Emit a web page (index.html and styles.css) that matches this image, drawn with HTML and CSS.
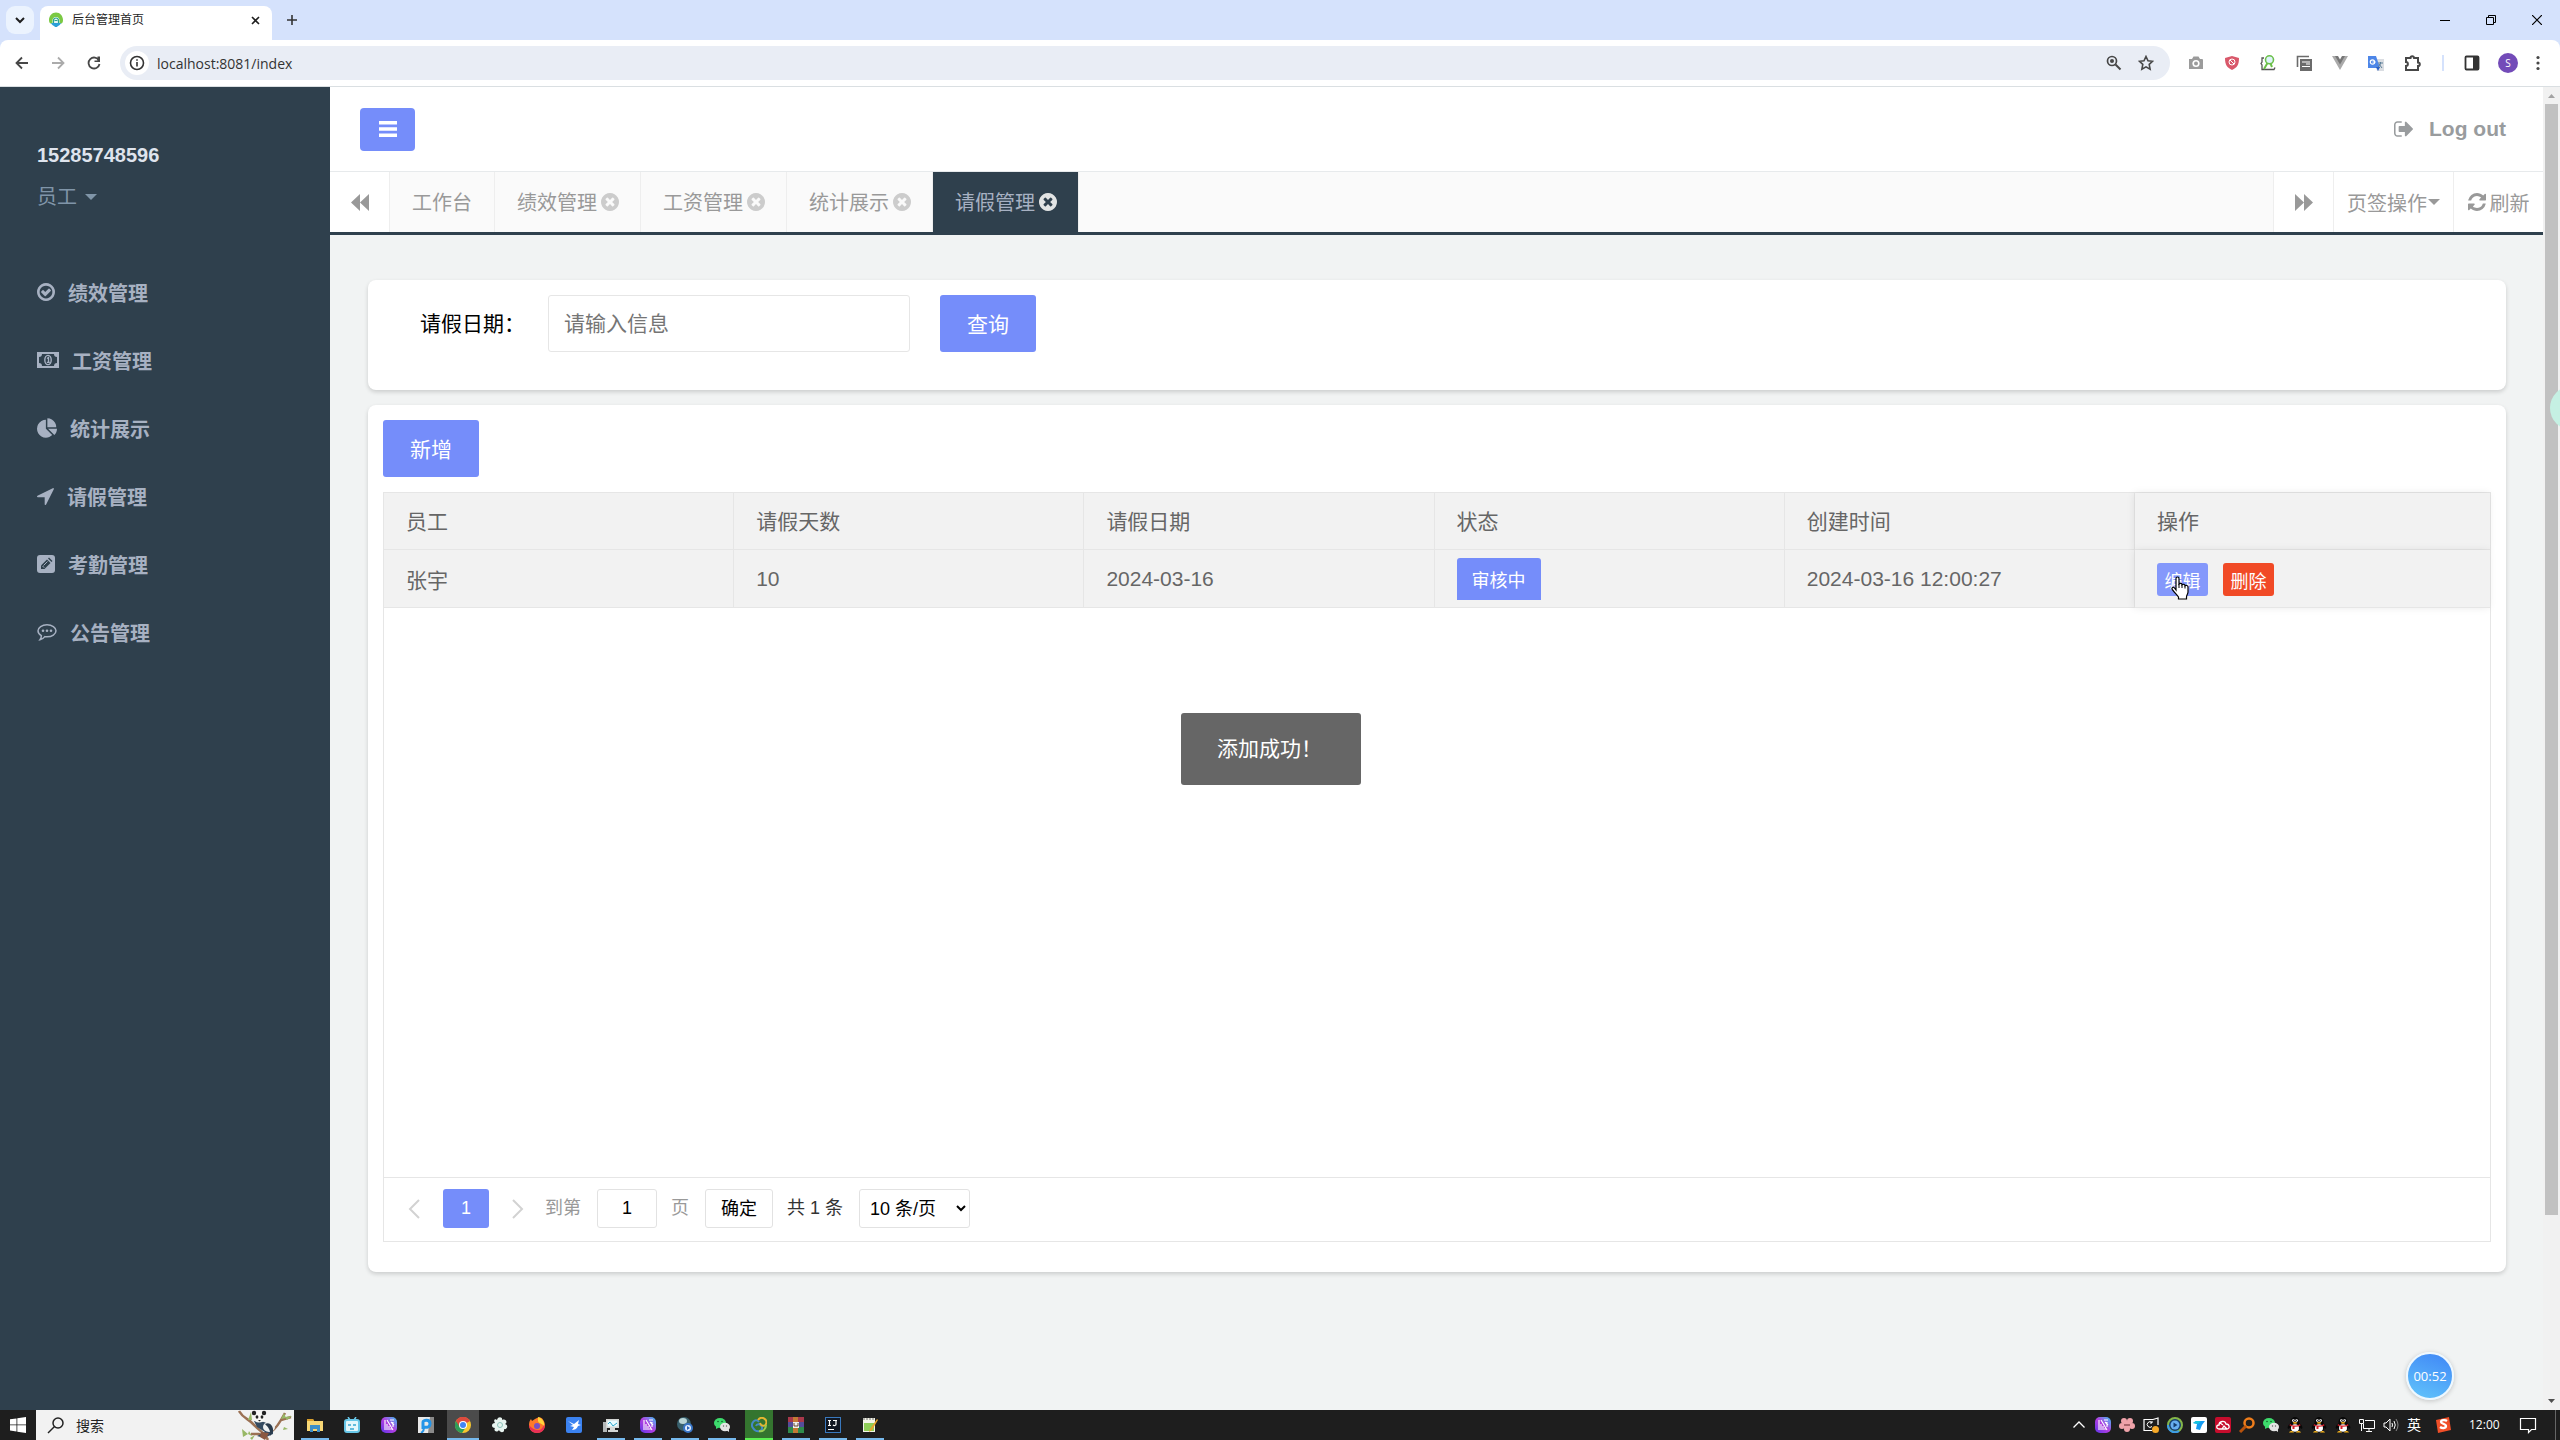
FILE: index.html
```html
<!DOCTYPE html>
<html lang="zh-CN">
<head>
<meta charset="utf-8">
<title>后台管理首页</title>
<link rel="stylesheet" href="styles.css">
</head>
<body>
<svg class="defs" width="0" height="0" aria-hidden="true">
  <symbol id="times" viewBox="128 128 1536 1536"><path d="M1277 1122q0-26-19-45l-181-181 181-181q19-19 19-45 0-27-19-46l-90-90q-19-19-46-19-26 0-45 19l-181 181-181-181q-19-19-45-19-27 0-46 19l-90 90q-19 19-19 46 0 26 19 45l181 181-181 181q-19 19-19 45 0 27 19 46l90 90q19 19 46 19 26 0 45-19l181-181 181 181q19 19 45 19 27 0 46-19l90-90q19-19 19-46zm387-226q0 209-103 385.5t-279.5 279.5-385.5 103-385.5-103-279.5-279.5-103-385.5 103-385.5 279.5-279.5 385.5-103 385.5 103 279.5 279.5 103 385.5z"/></symbol>
  <symbol id="wechat" viewBox="0 0 16 16"><ellipse cx="6" cy="6" rx="6" ry="5" fill="#3ddb6c"/><path d="M2 9v3l3-1.500z" fill="#3ddb6c"/><circle cx="4" cy="4.500" r=".8" fill="#145c2b"/><circle cx="8" cy="4.500" r=".8" fill="#145c2b"/><ellipse cx="11" cy="10" rx="5" ry="4.200" fill="#e4e4e4"/><path d="M12 13l3 2v-3z" fill="#e4e4e4"/><circle cx="9.500" cy="9" r=".7" fill="#666"/><circle cx="12.500" cy="9" r=".7" fill="#666"/></symbol>
  <symbol id="maze" viewBox="0 0 16 16"><defs><linearGradient id="mz" x1="0" y1="1" x2="1" y2="0"><stop offset="0" stop-color="#5a35e8"/><stop offset=".5" stop-color="#b43ee0"/><stop offset="1" stop-color="#3fc3f5"/></linearGradient></defs><rect width="16" height="16" rx="5" fill="url(#mz)"/><path d="M4 3v10M6 3l6 10M6 7v6M9 3l4 0M8 13V9M10 5l3 3M12 10V5M9 12l2 0" stroke="#fff" stroke-width="1.100" fill="none"/></symbol>
  <symbol id="penguin" viewBox="0 0 16 16"><ellipse cx="8" cy="5" rx="4.500" ry="5" fill="#080808"/><path d="M4 6c-3 2-4 4-3 6l2-1c0 3 2 4 5 4s5-1 5-4l2 1c1-2 0-4-3-6z" fill="#080808"/><ellipse cx="8" cy="11" rx="4" ry="3.800" fill="#fff"/><circle cx="6.400" cy="3.600" r="1.400" fill="#fff"/><circle cx="9.600" cy="3.600" r="1.400" fill="#fff"/><circle cx="6.700" cy="3.700" r=".6"/><circle cx="9.300" cy="3.700" r=".6"/><ellipse cx="8" cy="5.800" rx="2.200" ry=".9" fill="#f6b21b"/><path d="M3 7c3 2 7 2 10 0l.5 1.500c-2 1-4 1.300-6 1.200V12h-2V9.300L2.500 8.500z" fill="#d8202c"/><path d="M2 15.500c1-2 4-2 5 0zM9 15.500c1-2 4-2 5 0z" fill="#f6b21b"/></symbol>
</svg>

<header class="browser">
  <div class="tabstrip">
    <button class="tab-search" aria-label="搜索标签页"><svg width="10" height="7" viewBox="0 0 10 7"><path d="M1 1l4 4 4-4" fill="none" stroke="#1f1f1f" stroke-width="2"/></svg></button>
    <div class="browser-tab">
      <svg width="16" height="16" viewBox="0 0 16 16"><path d="M8 .5C4 .5 1 4 1 8c0 2 .5 3 1.500 3.500h2V8.500a3.500 3.500 0 0 1 7 0v3h2C14.500 11 15 10 15 8c0-4-3-7.500-7-7.500z" fill="#7ac943"/><path d="M5.500 11V8.500a2.500 2.500 0 0 1 5 0V11" fill="#e8f6f4" stroke="#2aa48e" stroke-width="1.200"/><path d="M3 11h10c-1 2.500-3 2.500-4 4H7c-1-1.500-3-1.500-4-4z" fill="#2b9fd8"/><path d="M6.500 8.500h3" stroke="#2aa48e"/></svg>
      <span class="browser-title">后台管理首页</span>
      <button class="plain" aria-label="关闭标签页"><svg width="9" height="9" viewBox="0 0 9 9"><path d="M1 1l7 7M8 1L1 8" stroke="#1f1f1f" stroke-width="1.600"/></svg></button>
    </div>
    <button class="plain new-tab" aria-label="新标签页"><svg width="12" height="12" viewBox="0 0 12 12"><path d="M6 1v10M1 6h10" stroke="#333" stroke-width="1.600"/></svg></button>
    <div class="window-buttons">
      <button class="plain" aria-label="最小化"><svg width="10" height="10" viewBox="0 0 10 10"><path d="M0 5.500h10" stroke="#000"/></svg></button>
      <button class="plain" aria-label="还原"><svg width="10" height="10" viewBox="0 0 10 10"><path d="M.5 2.500h7v7h-7zM2.500 2V.500h7v7H8" fill="none" stroke="#000"/></svg></button>
      <button class="plain" aria-label="关闭"><svg width="10" height="10" viewBox="0 0 10 10"><path d="M0 0l10 10M10 0L0 10" stroke="#000" stroke-width="1.200"/></svg></button>
    </div>
  </div>
  <div class="toolbar">
    <div class="nav-buttons">
      <button class="plain" aria-label="后退"><svg width="14" height="14" viewBox="0 0 14 14"><path d="M13 7H2M7 1.500L1.500 7 7 12.500" fill="none" stroke="#474747" stroke-width="1.800"/></svg></button>
      <button class="plain" aria-label="前进"><svg width="14" height="14" viewBox="0 0 14 14"><path d="M1 7h11M7 1.500L12.500 7 7 12.500" fill="none" stroke="#ababab" stroke-width="1.800"/></svg></button>
      <button class="plain" aria-label="重新加载"><svg width="14" height="14" viewBox="0 0 14 14"><path d="M12 4.500A5.500 5.500 0 1 0 12.500 8" fill="none" stroke="#474747" stroke-width="1.800"/><path d="M13 .5V6H7.500V4.500h3V.500z" fill="#474747"/></svg></button>
    </div>
    <div class="omnibox">
      <span class="site-info"><svg width="16" height="16" viewBox="0 0 16 16"><circle cx="8" cy="8" r="6.500" fill="none" stroke="#333" stroke-width="1.600"/><path d="M8 7v4.500M8 4.200v1.600" stroke="#333" stroke-width="1.600"/></svg></span>
      <input class="url" aria-label="地址" value="localhost:8081/index">
      <svg width="16" height="16" viewBox="0 0 16 16"><circle cx="6" cy="6" r="4.500" fill="none" stroke="#474747" stroke-width="1.700"/><circle cx="6" cy="6" r="2" fill="#474747"/><path d="M9.500 9.500l5 5" stroke="#474747" stroke-width="2"/></svg>
      <svg width="16" height="16" viewBox="0 0 16 16"><path d="M8 1.500l2 4.300 4.600.5-3.400 3.100.9 4.700L8 11.800l-4.100 2.300.9-4.700L1.400 6.300l4.600-.5z" fill="none" stroke="#474747" stroke-width="1.600"/></svg>
    </div>
    <div class="extensions">
      <svg width="16" height="16" viewBox="0 0 16 16"><path d="M1 4h3l1.500-2.500h5L12 4h2a1 1 0 0 1 1 1v9H1z" fill="#9b9b9b"/><circle cx="8" cy="8.500" r="3.600" fill="#fff"/><circle cx="8" cy="8.500" r="2" fill="#9b9b9b"/></svg>
      <svg width="16" height="16" viewBox="0 0 16 16"><path d="M8 1l7 2c0 7-2 9.500-7 12C3 12.500 1 10 1 3z" fill="#d9586a"/><circle cx="8" cy="7" r="3" fill="none" stroke="#fff"/><path d="M6 5l4 4" stroke="#fff"/></svg>
      <svg width="16" height="16" viewBox="0 0 16 16"><path d="M4 3H2v4L1 8.500 2 10v4.500h12l1-2" fill="none" stroke="#555" stroke-width="1.300"/><path d="M7.500 8L4 14M10.500 8.500L12 12" stroke="#6cc04a" stroke-width="2"/><circle cx="9.500" cy="4.800" r="4" fill="#dff3fb" stroke="#6cc04a" stroke-width="1.600"/></svg>
      <svg width="16" height="16" viewBox="0 0 16 16"><path d="M1.500 12V1.500H13" fill="none" stroke="#6b6b6b" stroke-width="1.600"/><rect x="4" y="4" width="12" height="12" fill="#6b6b6b"/><path d="M6 7h8M10 9h4M6 11.500h8" stroke="#fff" stroke-width="1.200"/></svg>
      <svg width="16" height="16" viewBox="0 0 16 16"><path d="M0 1h4l4 7 4-7h4L8 15z" fill="#aaa"/><path d="M3 1h3l2 3.500L10 1h3L8 9.500z" fill="#777"/></svg>
      <svg width="16" height="16" viewBox="0 0 16 16"><path d="M6 4h10v12H9z" fill="#dadde2"/><path d="M0 1h8l4 12H0z" fill="#4d86e8"/><path d="M8 12h4l-2 4z" fill="#2b5fc4"/><circle cx="4.500" cy="7" r="2.200" fill="none" stroke="#fff" stroke-width="1.200"/><path d="M4.500 7h3" stroke="#fff"/><path d="M10 8h5M12.500 7v1c0 2-1 3-2.500 4M11 9l3 4" stroke="#5c7f99" fill="none"/></svg>
      <svg width="18" height="18" viewBox="0 0 18 18"><path d="M2 4h4.500a1.800 1.800 0 0 1 3.600 0H14v4.500a1.800 1.800 0 0 1 0 3.600V16H2v-4c2.500 0 2.500-4 0-4z" fill="none" stroke="#474747" stroke-width="2"/></svg>
      <span class="divider"></span>
      <svg width="16" height="16" viewBox="0 0 16 16"><rect x="1.500" y="1.500" width="13" height="13" rx="1" fill="none" stroke="#333" stroke-width="1.800"/><path d="M9 2h6v12H9z" fill="#333"/></svg>
      <span class="avatar">S</span>
      <svg width="4" height="16" viewBox="0 0 4 16"><g fill="#474747"><circle cx="2" cy="2.500" r="1.600"/><circle cx="2" cy="8" r="1.600"/><circle cx="2" cy="13.500" r="1.600"/></g></svg>
    </div>
  </div>
</header>

<div class="viewport">
  <aside class="sidebar">
    <div class="profile">
      <strong class="profile-name">15285748596</strong>
      <button class="plain role">员工 <span class="caret"></span></button>
    </div>
    <nav class="menu">
      <a href="#"><svg width="18" height="18" viewBox="128 128 1536 1536"><path d="M1299 813l-422 422q-19 19-45 19t-45-19l-294-294q-19-19-19-45t19-45l102-102q19-19 45-19t45 19l147 147 275-275q19-19 45-19t45 19l102 102q19 19 19 45t-19 45zm141 83q0-148-73-273t-198-198-273-73-273 73-198 198-73 273 73 273 198 198 273 73 273-73 198-198 73-273zm224 0q0 209-103 385.5t-279.500 279.500-385.500 103-385.500-103-279.500-279.500-103-385.500 103-385.500 279.500-279.500 385.500-103 385.500 103 279.500 279.500 103 385.500z"/></svg>绩效管理</a>
      <a href="#"><svg width="22" height="16" viewBox="0 0 22 16"><path fill-rule="evenodd" d="M0 0h22v16H0zM5 2a3 3 0 0 1-3 3v6a3 3 0 0 1 3 3h12a3 3 0 0 1 3-3V5a3 3 0 0 1-3-3z"/><ellipse cx="11" cy="8" rx="3.200" ry="4.600" fill="none" stroke="#a7b1c2" stroke-width="1.400"/><path d="M10 6.500l1.500-1V10M9.800 10.300h3" fill="none" stroke="#a7b1c2" stroke-width="1.300"/></svg>工资管理</a>
      <a href="#"><svg width="20" height="20" viewBox="0 0 1728 1664"><path d="M768 890l546 546q-106 108-247.500 168t-298.500 60q-209 0-385.500-103t-279.500-279.500-103-385.500 103-385.500 279.500-279.500 385.500-103v762zm187 6h773q0 157-60 298.500t-168 247.500zm709-128h-768v-768q209 0 385.500 103t279.500 279.500 103 385.500z"/></svg>统计展示</a>
      <a href="#"><svg width="17" height="17" viewBox="190 250 1420 1420"><path d="M1593 349l-640 1280q-17 35-57 35-5 0-15-2-22-5-35.500-22.500t-13.500-39.500v-576h-576q-22 0-39.500-13.500t-22.500-35.500 4-42 29-30l1280-640q13-7 29-7 27 0 45 19 15 14 18.500 34.500t-6.500 39.500z"/></svg>请假管理</a>
      <a href="#"><svg width="18" height="18" viewBox="0 0 18 18"><rect width="18" height="18" rx="3"/><path d="M4 14v-3.500l6-6L13.500 8l-6 6z" fill="#2f404d"/><path d="M11 3.600l1-1 3.500 3.500-1 1z" fill="#2f404d"/><path d="M5.500 11l1.700 1.700M10.500 6.500l-4 4" stroke="#a7b1c2"/></svg>考勤管理</a>
      <a href="#"><svg width="20" height="18" viewBox="0 0 20 18"><path d="M10 1.800c5 0 9 2.600 9 6s-4 6-9 6c-.8 0-1.500 0-2.200-.2C6.500 15.300 5 16.500 3 16.800c.9-1.200 1.400-2.600 1.400-4.200C2.300 11.500 1 9.800 1 7.800c0-3.400 4-6 9-6z" fill="none" stroke="#a7b1c2" stroke-width="1.500"/><circle cx="6" cy="7.800" r="1.300"/><circle cx="10" cy="7.800" r="1.300"/><circle cx="14" cy="7.800" r="1.300"/></svg>公告管理</a>
    </nav>
  </aside>

  <main class="page">
    <div class="topbar">
      <button class="menu-toggle" aria-label="切换菜单"><svg width="18" height="16" viewBox="0 0 18 16"><path d="M0 0h18v3.500H0zM0 6.200h18v3.500H0zM0 12.400h18v3.500H0z" fill="#fff"/></svg></button>
      <a class="logout" href="#"><svg width="19" height="16" viewBox="64 256 1568 1280"><path d="M704 1440q0 4 1 20t.5 26.500-3 23.500-10 19.500-20.500 6.500h-320q-119 0-203.500-84.500t-84.500-203.500v-704q0-119 84.500-203.500t203.500-84.500h320q13 0 22.500 9.500t9.500 22.500q0 4 1 20t.5 26.500-3 23.500-10 19.500-20.500 6.500h-320q-66 0-113 47t-47 113v704q0 66 47 113t113 47h312l11.500 1 11.500 3 8 5.500 7 9 2 13.500zm928-544q0 26-19 45l-544 544q-19 19-45 19t-45-19-19-45v-288h-448q-26 0-45-19t-19-45v-384q0-26 19-45t45-19h448v-288q0-26 19-45t45-19 45 19l544 544q19 19 19 45z"/></svg>Log out</a>
    </div>
    <div class="page-tabs">
      <button class="tab-tool scroll-left" aria-label="向左"><svg width="18" height="17" viewBox="0 0 18 17"><path d="M9 0v17L0 8.500zM18 0v17L9 8.500z"/></svg></button>
      <div class="page-tab home"><a href="#">工作台</a></div>
      <div class="page-tab"><a href="#">绩效管理</a><button class="plain" aria-label="关闭"><svg width="18" height="18"><use href="#times"/></svg></button></div>
      <div class="page-tab"><a href="#">工资管理</a><button class="plain" aria-label="关闭"><svg width="18" height="18"><use href="#times"/></svg></button></div>
      <div class="page-tab"><a href="#">统计展示</a><button class="plain" aria-label="关闭"><svg width="18" height="18"><use href="#times"/></svg></button></div>
      <div class="page-tab active"><a href="#">请假管理</a><button class="plain" aria-label="关闭"><svg width="18" height="18"><use href="#times"/></svg></button></div>
      <div class="tab-tools">
        <button class="tab-tool scroll-right" aria-label="向右"><svg width="18" height="17" viewBox="0 0 18 17"><path d="M0 0v17l9-8.500zM9 0v17l9-8.500z"/></svg></button>
        <button class="tab-tool tab-actions">页签操作<span class="caret"></span></button>
        <button class="tab-tool tab-refresh"><svg width="18" height="18" viewBox="128 128 1536 1536"><path d="M1639 1056q0 5-1 7-64 268-268 434.500t-478 166.500q-146 0-282.500-55t-243.500-157l-129 129q-19 19-45 19t-45-19-19-45v-448q0-26 19-45t45-19h448q26 0 45 19t19 45-19 45l-137 137q71 66 161 102t187 36q134 0 250-65t186-179q11-17 53-117 8-23 30-23h192q13 0 22.500 9.500t9.500 22.500zm25-800v448q0 26-19 45t-45 19h-448q-26 0-45-19t-19-45 19-45l138-138q-148-137-349-137-134 0-250 65t-186 179q-11 17-53 117-8 23-30 23h-199q-13 0-22.500-9.500t-9.500-22.500v-7q65-268 270-434.500t480-166.500q146 0 284 55.500t245 156.500l130-129q19-19 45-19t45 19 19 45z"/></svg>刷新</button>
      </div>
    </div>

    <div class="content">
      <form class="card search-form">
        <label for="leave-date">请假日期：</label>
        <input id="leave-date" class="field" type="text" placeholder="请输入信息">
        <button class="btn" type="button">查询</button>
      </form>

      <section class="card list">
        <button class="btn" type="button">新增</button>
        <div class="grid">
          <table>
            <thead><tr><th>员工</th><th>请假天数</th><th>请假日期</th><th>状态</th><th>创建时间</th><th class="pinned">操作</th></tr></thead>
            <tbody><tr><td>张宇</td><td>10</td><td>2024-03-16</td><td><div class="cell"><button class="status">审核中</button></div></td><td>2024-03-16 12:00:27</td>
              <td class="pinned"><div class="cell actions"><button class="btn-xs edit">编辑
                <svg class="cursor" width="18" height="24" viewBox="0 0 18 24"><path d="M5 14V2.500C5 .5 8 .5 8 2.500V8c1-1 3-.7 3 .7 1-.9 3-.4 3 1 1-.7 3-.2 3 1.300v5c0 2-1.500 3-1.500 5v2h-8v-2C6 19 3 16 1.200 13.300.300 11.500 2.500 10.500 3.500 12z" fill="#fff" stroke="#000" stroke-width="1.200"/><path d="M8 8v4M11 9v3M14 10v2.500" stroke="#000"/></svg></button><button class="btn-xs delete">删除</button></div></td></tr></tbody>
          </table>
          <div class="pager">
            <button class="plain arrow" aria-label="上一页"><svg width="12" height="20" viewBox="0 0 12 20"><path d="M11 1l-9 9 9 9" fill="none" stroke="#d2d2d2" stroke-width="2"/></svg></button>
            <button class="current">1</button>
            <button class="plain arrow" aria-label="下一页"><svg width="12" height="20" viewBox="0 0 12 20"><path d="M1 1l9 9-9 9" fill="none" stroke="#d2d2d2" stroke-width="2"/></svg></button>
            <label class="skip" for="page-no">到第</label>
            <input id="page-no" class="page-no" type="text" value="1">
            <span class="skip unit">页</span>
            <button class="confirm">确定</button>
            <span class="total">共 1 条</span>
            <select class="limit" aria-label="每页条数"><option>10 条/页</option></select>
          </div>
        </div>
      </section>
    </div>
  </main>

  <div class="scrollbar" aria-hidden="true">
    <svg width="17" height="17" viewBox="0 0 17 17"><path d="M5 11l3.500-4 3.500 4z" fill="#a3a3a3"/></svg>
    <div class="thumb"></div>
    <svg width="17" height="17" viewBox="0 0 17 17"><path d="M5 6l3.500 4L12 6z" fill="#505050"/></svg>
  </div>

  <div class="toast" role="status">添加成功！</div>
  <div class="edge-bubble"></div>
  <div class="timer">00:52</div>
</div>

<footer class="taskbar">
  <button class="plain start" aria-label="开始"><svg width="16" height="16" viewBox="0 0 16 16"><path d="M0 2.300l6.500-.9v6.100H0zM7.300 1.300L16 0v7.500H7.300zM0 8.300h6.500v6.200L0 13.600zM7.300 8.300H16V16l-8.700-1.300z" fill="#fff"/></svg></button>
  <div class="search">
    <svg width="18" height="18" viewBox="0 0 18 18"><circle cx="11" cy="7" r="5" fill="none" stroke="#222" stroke-width="1.500"/><path d="M7.500 10.500L1 17" stroke="#222" stroke-width="1.500"/></svg>
    <input aria-label="搜索" placeholder="搜索">
    <svg width="56" height="30" viewBox="0 0 56 30"><path d="M1 1c4 7 9 8 12 11 8 8 10 9 14 13l3 5M27 26c8-4 12-9 16-16l4-7M43 10l10-3M13 24l8 0 7 3" fill="none" stroke="#9b7154" stroke-width="2.500"/><path d="M10 10l3-8 1 8zM43 9l3-6 2 5zM47 7l7-1-5 4zM46 17l4 2-5 1zM4 19l6 5-5 3zM12 28l5-3-3 5zM11 21l3 5-4-2z" fill="#98b866"/><path d="M16 11l10 1 9 4v8l-9 4-7-2 8-4-8-5z" fill="#344a60"/><ellipse cx="31" cy="17" rx="6" ry="5" fill="#eef0f0"/><path d="M27 14c5-3 9 3 8 8l-3 4c1-6-2-9-5-12z" fill="#293a4b"/><ellipse cx="21" cy="7" rx="6" ry="5.500" fill="#f8f8f5"/><circle cx="16" cy="3" r="2.200" fill="#222"/><circle cx="26" cy="3" r="2.200" fill="#222"/><ellipse cx="19" cy="7" rx="1.400" ry="1.800" fill="#222"/><ellipse cx="24" cy="7" rx="1.400" ry="1.800" fill="#222"/><path d="M20 10h3l-1.500 1.500z" fill="#222"/><path d="M23 22l8 1-4 7-5-3z" fill="#8b5942"/></svg>
  </div>
  <div class="apps">
    <span class="app running"><svg width="16" height="16" viewBox="0 0 16 16"><path d="M0 2h6l1 2h9v10H0z" fill="#f8d775"/><path d="M0 2h6l1 2H0z" fill="#d99e2b"/><path d="M3 15V8h10v7h-3v-3H6v3z" fill="#3d8fc9"/></svg></span>
    <span class="app"><svg width="16" height="16" viewBox="0 0 16 16"><path d="M4 0l2 3M12 0l-2 3" stroke="#68c7e8" stroke-width="1.500"/><rect x="1" y="3" width="14" height="12" rx="2" fill="#e4f7fc" stroke="#68c7e8" stroke-width="2"/><path d="M4 8h3M9 8h3M6 12h4" stroke="#37a8d1" stroke-width="1.500"/></svg></span>
    <span class="app"><svg width="16" height="16"><use href="#maze"/></svg></span>
    <span class="app"><svg width="16" height="16" viewBox="0 0 16 16"><path d="M0 0h16v16H0z" fill="#e8e8e8"/><path d="M12 0h4v16h-6z" fill="#8a8a8a"/><path d="M5 12V5c0-2 7-3 7 1.500S8 10.500 6 10" fill="none" stroke="#2495e8" stroke-width="3"/><path d="M3 16c2-1 3-3 3-6" fill="none" stroke="#2495e8" stroke-width="2"/></svg></span>
    <span class="app running focused"><svg width="16" height="16" viewBox="0 0 16 16"><circle cx="8" cy="8" r="8" fill="#f7c62f"/><path d="M8 8L1 4a8 8 0 0 1 14 0z" fill="#dd4b3e"/><path d="M8 8L1 4a8 8 0 0 0 6 12l4-6z" fill="#2e9f58"/><path d="M4 5a8 8 0 0 1 4-1h7A8 8 0 0 0 1 4l3 5z" fill="#dd4b3e"/><circle cx="8" cy="8" r="4" fill="#fff"/><circle cx="8" cy="8" r="3" fill="#4285f4"/></svg></span>
    <span class="app"><svg width="16" height="16" viewBox="0 0 16 16"><path d="M5 3c1-4 6-3 5 0 4-2 6 3 3 4 4 1 2 6-1 5 1 4-4 4-5 1-2 3-6 1-4-2-4 0-4-5 0-5-2-3 0-5 2-3z" fill="#e8f4f0"/><circle cx="8" cy="8" r="2.500" fill="none" stroke="#8cc4bb"/></svg></span>
    <span class="app"><svg width="16" height="16" viewBox="0 0 16 16"><path d="M8 1c4-3 8 3 8 7 0 5-4 8-8 8s-8-3-8-8c0-3 1-5 2-6l1 2 3-2z" fill="#ff7a2a"/><path d="M0 8c0 5 4 8 8 8 6 0 9-5 7-9-1 4-3 6-6 6S2 11 0 8z" fill="#e92f57"/><path d="M9 0c4 1 7 5 6 9-2-3-5-2-6-5z" fill="#ffd63b"/><circle cx="8" cy="9" r="3" fill="#7951c4"/></svg></span>
    <span class="app"><svg width="16" height="16" viewBox="0 0 16 16"><rect width="16" height="16" rx="2" fill="#3b82f0"/><path d="M2 4l6 3 5-4-1 4 3 1-3 1c-1 3-4 4-6 4l2-3-4-1 3-1z" fill="#fff"/></svg></span>
    <span class="app running"><svg width="16" height="16" viewBox="0 0 16 16"><path d="M0 5h4v10H0z" fill="#b4b8b8"/><path d="M3 2h13v9H3zM7 11h5v2h3v2H5v-2h2z" fill="#d4d6d4"/><path d="M4.500 3.500h10v6h-10z" fill="#e9fbff"/><path d="M5 7l2-2 3 4 4-3" fill="none" stroke="#2ba6c9"/></svg></span>
    <span class="app running"><svg width="16" height="16"><use href="#maze"/></svg></span>
    <span class="app running"><svg width="16" height="16" viewBox="0 0 16 16"><circle cx="7" cy="7" r="7" fill="#38606d"/><ellipse cx="6" cy="4" rx="4" ry="3" fill="#b9d4d6"/><circle cx="11" cy="11" r="5" fill="#3975c6"/><circle cx="11" cy="11" r="3" fill="#e2edff"/><path d="M10 9l3 2-3 2z" fill="#2865bc"/></svg></span>
    <span class="app running"><svg width="16" height="16"><use href="#wechat"/></svg></span>
    <span class="app running recording"><svg width="16" height="16" viewBox="0 0 16 16"><g fill="none" stroke-width="2"><path d="M8 5C4 0-1 7 2 11c3 5 10 4 9-1-1-3-5-4-6-1" stroke="#4588c7"/><path d="M7 3c4-5 10 0 8 4-1 3-5 2-6-1" stroke="#e5b532"/><path d="M8 14c4 1 7-2 7-6" stroke="#9acd52"/></g></svg></span>
    <span class="app running"><svg width="16" height="16" viewBox="0 0 16 16"><path d="M0 0h16v5H0z" fill="#a9384b"/><path d="M0 5h16v5H0z" fill="#554d9b"/><path d="M0 10h16v6H0z" fill="#2f8b4c"/><path d="M5 0h5v16H5z" fill="#c47a35"/><path d="M5 5h6v6H5z" fill="#eee"/><path d="M6 6v3h4V6" fill="none" stroke="#6b4a2d"/></svg></span>
    <span class="app running"><svg width="16" height="16" viewBox="0 0 16 16"><rect x=".5" y=".5" width="15" height="15" fill="#111722" stroke="#3978bd"/><path d="M3 3.500h3M4.500 3.500v5M3 8.500h3M8 3.500h4M11 3.500v4c0 1-2 1.500-3 .5M3 12.500h6" fill="none" stroke="#fff" stroke-width="1.200"/></svg></span>
    <span class="app running"><svg width="16" height="16" viewBox="0 0 16 16"><path d="M1 1h12v14H1z" fill="#f4f5e8"/><path d="M2 6h10v8H2z" fill="#8fce57"/><path d="M2 1v2M5 1v2M8 1v2M11 1v2" stroke="#777"/><path d="M15 2L8 12l-1 3 3-2 6-10z" fill="#e6a42d"/></svg></span>
  </div>
  <div class="tray">
    <svg width="16" height="16" viewBox="0 0 16 16"><path d="M2.500 10.500L8 5l5.500 5.500" fill="none" stroke="#fff" stroke-width="1.300"/></svg>
    <svg width="16" height="16"><use href="#maze"/></svg>
    <svg width="16" height="16" viewBox="0 0 16 16"><g fill="#f0a3aa"><circle cx="5" cy="4" r="3"/><circle cx="11" cy="4" r="3"/><circle cx="13" cy="9" r="3"/><circle cx="8" cy="12" r="3"/><circle cx="3" cy="9" r="3"/><circle cx="8" cy="8" r="4"/></g><path d="M5 8h6" stroke="#a9646b" stroke-width="2"/></svg>
    <svg width="16" height="16" viewBox="0 0 16 16"><path d="M10 2.500H1v11h8M10 2.500l5-1.500v7" fill="none" stroke="#fff" stroke-width="1.200"/><path d="M9 5.500a2.800 2.800 0 1 0 0 4M9 4v2H7" fill="none" stroke="#fff"/><circle cx="12.500" cy="12.500" r="3.500" fill="#f7a928"/></svg>
    <svg width="16" height="16" viewBox="0 0 16 16"><circle cx="8" cy="8" r="7" fill="#173d6f" stroke="#85b74a" stroke-width="2"/><path d="M1 8a7 7 0 0 0 11 6" fill="none" stroke="#3b9ce8" stroke-width="2"/><circle cx="8" cy="8" r="4.500" fill="#67aef2"/><path d="M6.500 5.500l4 2.500-4 2.500z" fill="#173d6f"/></svg>
    <svg width="16" height="16" viewBox="0 0 16 16"><rect width="16" height="16" rx="2" fill="#fff"/><path d="M2 6l3-2h9l-3 4-2 5-4-1 1-5z" fill="#149bf2"/><path d="M2 6l3-2h5L7 7z" fill="#16c5dd"/></svg>
    <svg width="16" height="16" viewBox="0 0 16 16"><rect width="16" height="16" rx="2" fill="#c70d2d"/><path d="M4 12c-3 0-3-4 0-4 0-4 6-5 7-1 4 0 4 5 1 5zM7 12l2-3 3 3M5 6l3 2" fill="none" stroke="#fff" stroke-width="1.300"/></svg>
    <svg width="16" height="16" viewBox="0 0 16 16"><circle cx="10" cy="6" r="4.500" fill="none" stroke="#ef7d1b" stroke-width="2.500"/><path d="M7 9l-6 6" stroke="#b7520c" stroke-width="3"/></svg>
    <svg width="16" height="16"><use href="#wechat"/></svg>
    <svg width="16" height="16"><use href="#penguin"/></svg>
    <svg width="16" height="16"><use href="#penguin"/></svg>
    <svg width="16" height="16"><use href="#penguin"/></svg>
    <svg width="16" height="16" viewBox="0 0 16 16"><path d="M6 3.500h9.500v8H4.500V7M10 12v3M7 14.500h6M.5 2.500h4v4h-4zM2.500 6v8" fill="none" stroke="#fff"/></svg>
    <svg width="16" height="16" viewBox="0 0 16 16"><path d="M1 6h2l4-4v12l-4-4H1z" fill="none" stroke="#fff"/><path d="M9 6q1 2 0 4M11 4q2.500 4 0 8" fill="none" stroke="#fff"/><path d="M13 2q4 6 0 12" fill="none" stroke="#888"/></svg>
    <span class="ime">英</span>
    <svg class="sogou" width="16" height="16" viewBox="0 0 16 16"><path d="M1 3l13-3 2 13-13 3z" fill="#f04f28"/><path d="M12 4c-2-1.500-6-1-6 1s5 1.500 5 4-4 2.500-6 1" fill="none" stroke="#fff" stroke-width="2.300"/></svg>
    <time class="clock">12:00</time>
    <svg width="18" height="18" viewBox="0 0 18 18"><path d="M1.500 2.500h15v11h-4l-3 3v-3h-8z" fill="none" stroke="#fff" stroke-width="1.200"/></svg>
    <span class="show-desktop"></span>
  </div>
</footer>
</body>
</html>
```
FILE: styles.css
```css
* { box-sizing: border-box; }

body {
  margin: 0;
  min-height: 100vh;
  display: flex;
  flex-direction: column;
  font-family: "Liberation Sans", "Noto Sans CJK SC", sans-serif;
  font-size: 20px;
  background: #f1f3f3;
}

button, input, select { font: inherit; margin: 0; }
button { cursor: pointer; }
a { text-decoration: none; color: inherit; }
svg { display: block; flex: none; }
.defs { position: absolute; }

.plain {
  display: flex;
  align-items: center;
  justify-content: center;
  padding: 0;
  border: 0;
  background: none;
  color: inherit;
}

/* browser chrome */
.browser {
  flex: none;
  font-family: "Open Sans", "Noto Sans CJK SC", sans-serif;
  border-bottom: 1px solid #dadfe2;
  background: #d5e2fc;
}
.tabstrip {
  display: flex;
  height: 40px;
  padding: 6px 0 0 6px;
}
.tab-search {
  display: flex;
  align-items: center;
  justify-content: center;
  width: 28px;
  height: 28px;
  margin-right: 6px;
  padding: 0;
  border: 0;
  border-radius: 9px;
  background: #ebf3fe;
}
.browser-tab {
  display: flex;
  align-items: center;
  width: 232px;
  height: 34px;
  padding: 0 12px 6px 8px;
  border-radius: 8px 8px 0 0;
  background: #fff;
}
.browser-title {
  flex: 1;
  margin-left: 8px;
  font-size: 12px;
  line-height: 16px;
  color: #1f1f1f;
}
.new-tab { width: 28px; height: 28px; margin-left: 6px; }
.window-buttons { display: flex; margin-left: auto; }
.window-buttons .plain { width: 46px; height: 28px; }
.toolbar {
  display: flex;
  align-items: center;
  height: 46px;
  padding: 0 20px 0 4px;
  border-radius: 8px 8px 0 0;
  background: #fff;
}
.nav-buttons { display: flex; width: 116px; }
.nav-buttons .plain { width: 36px; height: 34px; }
.omnibox {
  flex: 1;
  display: flex;
  align-items: center;
  gap: 16px;
  height: 34px;
  padding: 0 16px 0 5px;
  border-radius: 17px;
  background: #e9edf5;
}
.site-info {
  display: flex;
  align-items: center;
  justify-content: center;
  width: 24px;
  height: 24px;
  border-radius: 50%;
  background: #fff;
}
.url {
  flex: 1;
  min-width: 0;
  margin-left: -8px;
  padding: 0;
  border: 0;
  background: none;
  font-size: 14px;
  color: #333;
}
.extensions {
  display: flex;
  align-items: center;
  gap: 20px;
  padding-left: 18px;
}
.extensions .divider { width: 2px; height: 16px; background: #d5e2fc; }
.avatar {
  width: 20px;
  height: 20px;
  margin: 0 -2px;
  border-radius: 50%;
  background: #734bb8;
  color: #fff;
  font-size: 10px;
  line-height: 20px;
  text-align: center;
}

/* application frame */
.viewport {
  position: relative;
  flex: 1;
  display: flex;
  overflow: hidden;
}
.sidebar {
  flex: none;
  width: 330px;
  background: #2f404d;
  color: #a7b1c2;
}
.profile {
  display: flex;
  flex-direction: column;
  align-items: flex-start;
  gap: 14px;
  padding: 54px 37px 47px;
}
.profile-name {
  line-height: 28px;
  color: #dfe4ed;
}
.role {
  gap: 8px;
  line-height: 28px;
  color: #8095a8;
}
.caret {
  border: 6px solid transparent;
  border-top-color: currentColor;
  border-bottom: 0;
}
.menu a {
  display: flex;
  align-items: center;
  gap: 13px;
  height: 68px;
  padding-left: 37px;
  font-weight: 700;
}
.menu svg { fill: #a7b1c2; }

.page { flex: 1; min-width: 0; }
.topbar {
  display: flex;
  align-items: center;
  justify-content: space-between;
  height: 85px;
  padding: 0 37px 0 30px;
  border-bottom: 1px solid #e7eaec;
  background: #fff;
}
.menu-toggle {
  display: flex;
  align-items: center;
  justify-content: center;
  width: 55px;
  height: 43px;
  padding: 0;
  border: 0;
  border-radius: 4px;
  background: #758dfa;
}
.logout {
  display: flex;
  align-items: center;
  gap: 16px;
  font-size: 21px;
  font-weight: 700;
  color: #999c9e;
}
.logout svg { fill: #999c9e; }

.page-tabs {
  display: flex;
  height: 63px;
  border-bottom: 3px solid #2f404d;
  background: #fafafa;
  color: #999;
}
.page-tab {
  display: flex;
  align-items: center;
  gap: 4px;
  padding: 0 21px 1px 22px;
  border-right: 1px solid #eee;
}
.page-tab.home { padding-right: 22px; }
.page-tab svg { fill: #ccc; }
.page-tab.active { background: #2f404d; color: #a7b1c2; }
.page-tab.active svg { fill: #e2e4e4; }
.tab-tools { display: flex; margin-left: auto; }
.tab-tool {
  display: flex;
  align-items: center;
  justify-content: center;
  padding: 0;
  border: 0;
  border-left: 1px solid #eee;
  background: #fff;
  color: #999;
}
.tab-tool svg { fill: #999; }
.scroll-left { width: 60px; border-left: 0; border-right: 1px solid #eee; }
.scroll-right { width: 60px; }
.tab-actions { width: 120px; gap: 1px; }
.tab-refresh { width: 90px; gap: 4px; }

.content { padding: 45px 37px 138px 38px; }
.card {
  border-radius: 8px;
  background: #fff;
  box-shadow: 0 2px 4px rgba(0, 0, 0, .16);
  font-size: 21px;
}
.search-form {
  display: flex;
  height: 110px;
  margin-bottom: 15px;
  padding: 15px 52px;
}
.search-form label { width: 128px; line-height: 57px; }
.field {
  width: 362px;
  height: 57px;
  margin-right: 30px;
  padding: 0 15px;
  border: 1px solid #e6e6e6;
  border-radius: 3px;
}
.field::placeholder { color: #757575; }
.btn {
  display: block;
  width: 96px;
  height: 57px;
  padding: 0 0 2px;
  border: 0;
  border-radius: 3px;
  background: #758dfa;
  color: #fff;
}
.list { padding: 15px 15px 30px; }
.grid {
  display: flex;
  flex-direction: column;
  min-height: 750px;
  margin-top: 15px;
  border: 1px solid #e6e6e6;
}
table {
  width: 100%;
  table-layout: fixed;
  border-collapse: separate;
  border-spacing: 0;
  color: #666;
}
th, td {
  padding: 0 22px;
  border-right: 1px solid #e6e6e6;
  border-bottom: 1px solid #e6e6e6;
  background: #f2f2f2;
  text-align: left;
  font-weight: 400;
}
th { height: 57px; padding-bottom: 2px; }
td { height: 58px; }
.pinned { width: 355px; border-right: 0; box-shadow: -1px 0 8px rgba(0, 0, 0, .08); }
.cell { display: flex; align-items: center; gap: 15px; height: 57px; }
.status {
  width: 84px;
  height: 42px;
  padding: 0;
  border: 0;
  border-radius: 3px 3px 0 0;
  background: #758dfa;
  color: #fff;
  font-size: 18px;
}
.actions { padding-top: 2px; }
.btn-xs {
  position: relative;
  width: 51px;
  height: 33px;
  padding: 0;
  border: 0;
  border-radius: 3px;
  color: #fff;
  font-size: 18px;
}
.edit { background: #8498fb; }
.delete { background: #f14a26; }
.cursor { position: absolute; left: 14px; top: 13px; }

.pager {
  display: flex;
  height: 64px;
  margin-top: auto;
  padding: 11px 15px;
  border-top: 1px solid #e6e6e6;
  font-size: 18px;
  line-height: 39px;
}
.arrow { width: 30px; height: 39px; }
.current {
  width: 46px;
  height: 39px;
  margin: 0 14px;
  padding: 0;
  border: 0;
  border-radius: 3px;
  background: #758dfa;
  color: #fff;
}
.skip { margin-left: 12px; color: #999; }
.skip.unit { margin-left: 14px; }
.page-no, .confirm, .limit {
  height: 39px;
  border: 1px solid #e2e2e2;
  border-radius: 3px;
  background: #fff;
  color: #000;
}
.page-no { width: 60px; margin-left: 16px; padding: 0; text-align: center; }
.confirm { width: 68px; margin: 0 14px 0 16px; padding: 0; }
.total { color: #333; }
.limit { width: 111px; margin-left: 16px; padding: 0 6px; }

.scrollbar {
  flex: none;
  display: flex;
  flex-direction: column;
  width: 17px;
  background: #f1f1f1;
}
.thumb { width: 13px; height: 84%; margin: 0 auto auto; background: #c1c1c1; }

.toast {
  position: absolute;
  left: 1181px;
  top: 626px;
  width: 180px;
  padding: 18px 36px;
  border-radius: 3px;
  background: #666;
  color: #fff;
  font-size: 21px;
  line-height: 36px;
  white-space: nowrap;
}
.edge-bubble {
  position: absolute;
  right: -34px;
  top: 299px;
  width: 44px;
  height: 44px;
  border-radius: 50%;
  background: #c5f0e3;
}
.timer {
  position: absolute;
  right: 106px;
  bottom: 10px;
  width: 48px;
  height: 48px;
  border: 2px solid #eef8ff;
  border-radius: 50%;
  background: linear-gradient(20deg, #62c5fb, #3f86f6);
  box-shadow: 0 1px 5px rgba(0, 0, 0, .2);
  color: #fff;
  font: 13px/44px "Open Sans", sans-serif;
  text-align: center;
}

/* desktop taskbar */
.taskbar {
  flex: none;
  display: flex;
  height: 30px;
  background: #1e1e1e;
  font-family: "Open Sans", "Noto Sans CJK SC", sans-serif;
  color: #fff;
}
.start { width: 36px; }
.search {
  display: flex;
  align-items: center;
  width: 258px;
  padding-left: 11px;
  background: #f2f2f2;
}
.search input {
  flex: 1;
  min-width: 0;
  margin-left: 11px;
  padding: 0;
  border: 0;
  background: none;
  font-size: 14px;
}
.search input::placeholder { color: #222; }
.apps { display: flex; gap: 9px; padding-left: 7px; }
.app {
  display: flex;
  align-items: center;
  justify-content: center;
  width: 28px;
  border-top: 2px solid transparent;
  border-bottom: 2px solid transparent;
}
.running { border-bottom-color: #76b9ed; }
.focused { width: 32px; margin: 0 -2px; background: #4b4b4b; border-top-color: #4b4b4b; }
.recording { background: #34752f; border-top-color: #34752f; border-bottom-color: #5cf052; }
.tray {
  display: flex;
  align-items: center;
  gap: 8px;
  margin-left: auto;
}
.ime { width: 14px; font-size: 14px; line-height: 30px; }
.sogou { margin: 0 10px 0 6px; }
.clock { width: 32px; margin-right: 10px; font-size: 12px; line-height: 30px; }
.show-desktop { width: 5px; height: 30px; margin-left: 10px; border-left: 1px solid #666; }
```
